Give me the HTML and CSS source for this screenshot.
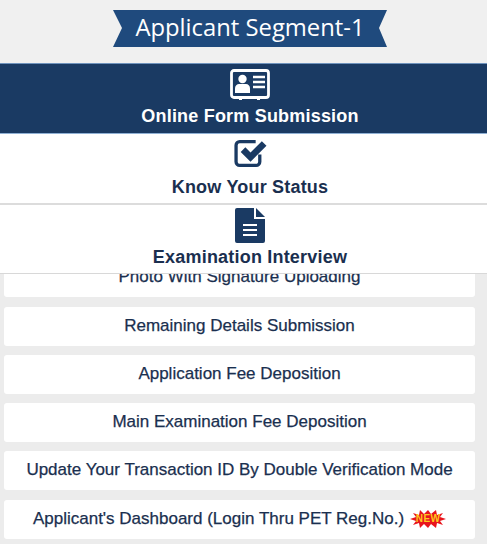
FILE: index.html
```html
<!DOCTYPE html>
<html lang="en">
<head>
<meta charset="utf-8">
<title>Applicant Segment-1</title>
<link rel="stylesheet" href="styles.css">
</head>
<body>
<header class="head">
  <div class="ribbon">
    <svg class="ribbon-bg" viewBox="0 0 274 37" preserveAspectRatio="none" aria-hidden="true"><polygon points="0,0 274,0 266,18 274,37 0,37 9,18" fill="#1f4a7d"/></svg>
    <h1 class="ribbon-text">Applicant Segment-1</h1>
  </div>
</header>
<nav class="tabs">
  <a class="tab tab-active">
    <svg class="ico ico-card" viewBox="0 0 40 31" aria-hidden="true">
      <rect x="1.500" y="1.500" width="37" height="27" rx="2.500" fill="none" stroke="#fff" stroke-width="2.800"/>
      <rect x="9" y="27" width="3" height="4" fill="#fff"/><rect x="27" y="27" width="3" height="4" fill="#fff"/>
      <circle cx="12.500" cy="10" r="4.200" fill="#fff"/>
      <path d="M5 24v-4.500c0-3 2-4.500 4-4.500h7c2 0 4 1.500 4 4.500V24z" fill="#fff"/>
      <path d="M23 8h12M23 13h12M23 18h12" stroke="#fff" stroke-width="2.400"/>
    </svg>
    <span class="tab-label">Online Form Submission</span>
  </a>
  <a class="tab tab-mid">
    <svg class="ico ico-check" viewBox="0 0 32 28" aria-hidden="true">
      <path d="M25 15v7a3.500 3.500 0 0 1-3.500 3.500H5.500A3.500 3.500 0 0 1 2 22V6a3.500 3.500 0 0 1 3.500-3.500H21" fill="none" stroke="#1a3a63" stroke-width="3.200"/>
      <path d="M6.500 12.500l4.500-4.500 5 5L27 2l4.500 4.500L16 22z" fill="#1a3a63"/>
    </svg>
    <span class="tab-label">Know Your Status</span>
  </a>
  <a class="tab tab-last">
    <svg class="ico ico-doc" viewBox="0 0 30 35" aria-hidden="true">
      <path d="M2 0h17v11h11v22a2 2 0 0 1-2 2H2a2 2 0 0 1-2-2V2a2 2 0 0 1 2-2z" fill="#1a3a63"/>
      <path d="M21 0l9 9h-9z" fill="#1a3a63"/>
      <path d="M8 17h14M8 22h14M8 27h14" stroke="#fff" stroke-width="2.200"/>
    </svg>
    <span class="tab-label">Examination Interview</span>
  </a>
</nav>
<main class="list-clip">
  <ul class="list">
    <li class="row">Photo With Signature Uploading</li>
    <li class="row">Remaining Details Submission</li>
    <li class="row">Application Fee Deposition</li>
    <li class="row">Main Examination Fee Deposition</li>
    <li class="row">Update Your Transaction ID By Double Verification Mode</li>
    <li class="row">Applicant's Dashboard (Login Thru PET Reg.No.)
      <span class="new"><svg class="new-burst" viewBox="0 0 36 18" aria-hidden="true"><polygon points="0,9 6,7 3,3 9,5 10,0 14,4 18,0 21,4 26,0 27,5 33,3 30,7 36,9 30,11 33,15 27,13 26,18 21,14 18,18 14,14 10,18 9,13 3,15 6,11" fill="#e8141c"/></svg><span class="new-text">NEW</span></span>
    </li>
  </ul>
</main>
</body>
</html>
```
FILE: styles.css
```css
* { box-sizing: border-box; }
html, body { margin: 0; padding: 0; }
body {
  width: 487px;
  height: 544px;
  overflow: hidden;
  background: #ececec;
  font-family: "Liberation Sans", Arial, sans-serif;
  color: #1a2f4f;
}
.head {
  height: 63px;
  padding: 10px 0 0 13px;
  display: flex;
  justify-content: center;
  background: #f0f0f0;
}
.ribbon {
  position: relative;
  width: 274px;
  height: 37px;
  display: flex;
  align-items: center;
  justify-content: center;
  padding-bottom: 3px;
}
.ribbon-bg { position: absolute; inset: 0; width: 100%; height: 100%; }
.ribbon-text {
  position: relative;
  margin: 0;
  font: 400 23.800px/34px "Open Sans", sans-serif;
  color: #fff;
}
.tabs { display: flex; flex-direction: column; position: relative; }
.tab {
  height: 71px;
  padding-left: 13px;
  display: flex;
  flex-direction: column;
  align-items: center;
  background: #fff;
  border-bottom: 2px solid #dcdcdc;
  color: #1a2f4f;
}
.tab-active {
  background: #1a3a63;
  color: #fff;
  border-top: 1px solid #6f93bd;
  border-bottom: 1px solid #8fb0d4;
  padding-top: 5px;
}
.tab-last { height: 69px; border-bottom: 1px solid #d8d8d8; }
.ico { display: block; flex: none; }
.ico-card { width: 40px; height: 31px; }
.ico-check { width: 33px; height: 29px; margin-top: 5px; }
.ico-doc { width: 30px; height: 35px; margin-top: 3px; }
.tab-label {
  font-size: 18px;
  font-weight: 700;
  line-height: 21px;
  letter-spacing: 0.2px;
}
.tab-active .tab-label { margin-top: 6px; }
.tab-mid .tab-label { margin-top: 9px; }
.tab-last .tab-label { margin-top: 4px; }
.list-clip { height: 271px; overflow: hidden; }
.list {
  list-style: none;
  margin: -15.700px 0 0;
  padding: 0 12px 0 4px;
  display: flex;
  flex-direction: column;
  gap: 9.250px;
}
.row {
  height: 39px;
  background: #fff;
  border-radius: 3px;
  display: flex;
  align-items: center;
  justify-content: center;
  gap: 6px;
  font-size: 17px;
  padding-bottom: 1px;
  color: #1a2f4f;
  -webkit-text-stroke: 0.25px #1a2f4f;
  white-space: nowrap;
}
.new { position: relative; display: inline-flex; width: 36px; height: 18px; align-items: center; justify-content: center; }
.new-burst { position: absolute; inset: 0; width: 100%; height: 100%; }
.new-text { position: relative; font-size: 10px; font-weight: 700; color: #ffc81f; letter-spacing: 0.5px; -webkit-text-stroke: 0px transparent; }
```
